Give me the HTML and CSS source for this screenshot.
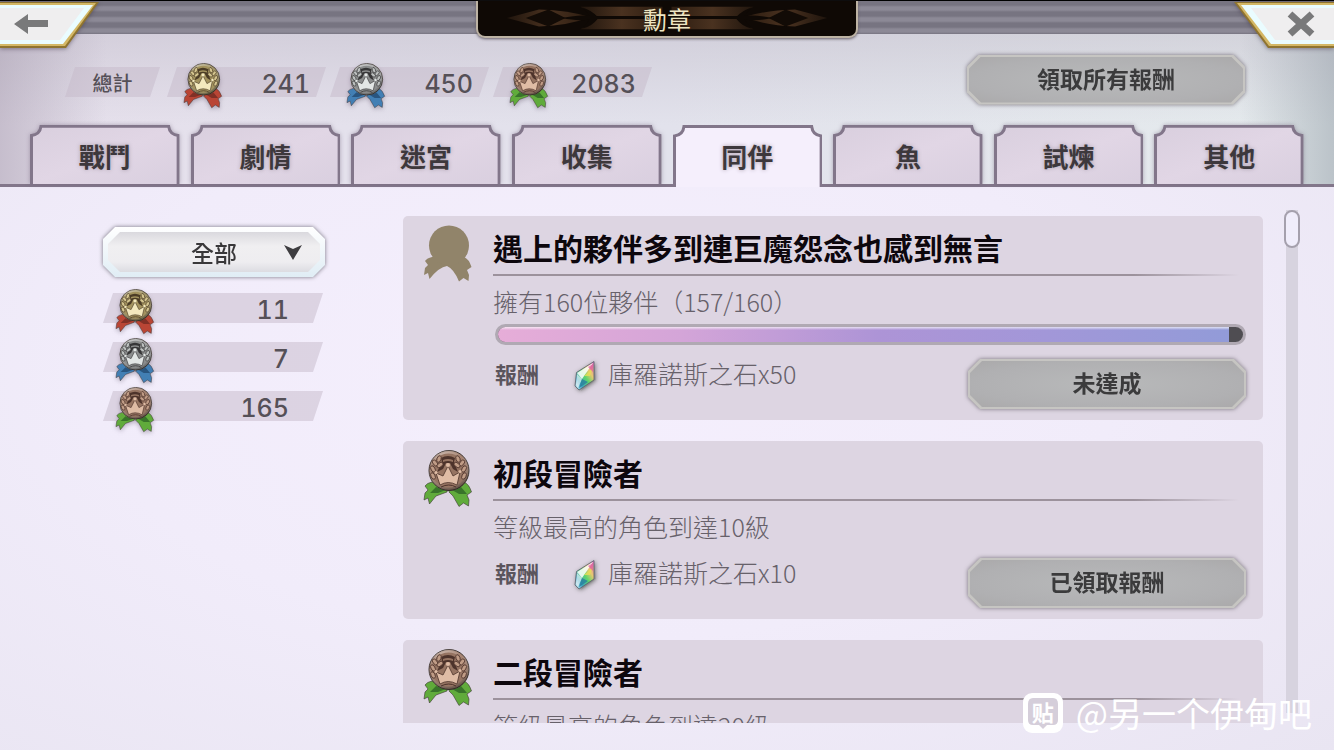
FILE: index.html
```html
<!DOCTYPE html>
<html lang="zh-Hant">
<head>
    <meta charset="UTF-8">
    <meta name="viewport" content="width=device-width, initial-scale=1.0">
    <title>勳章</title>
    <link rel="stylesheet" href="styles.css">
</head>
<body>

    <!-- Shared shapes -->
    <svg class="defs" aria-hidden="true">
        <defs>
            <radialGradient id="shine" cx="40%" cy="25%" r="75%">
                <stop offset="0" stop-color="#fff" stop-opacity=".6"/>
                <stop offset=".55" stop-color="#fff" stop-opacity="0"/>
                <stop offset="1" stop-color="#000" stop-opacity=".4"/>
            </radialGradient>
            <linearGradient id="tabFill" x1="0" y1="0" x2="1" y2="1">
                <stop offset="0" stop-color="#d9cfde"/>
                <stop offset=".5" stop-color="#e1d6e5"/>
                <stop offset="1" stop-color="#d9cfdf"/>
            </linearGradient>
            <linearGradient id="gem" x1="1" y1="0" x2="0" y2="1">
                <stop offset="0" stop-color="#d866c8"/>
                <stop offset=".3" stop-color="#e8c870"/>
                <stop offset=".5" stop-color="#5fd66a"/>
                <stop offset=".75" stop-color="#3ba6c4"/>
                <stop offset="1" stop-color="#e4f4f8"/>
            </linearGradient>
            <linearGradient id="plaqueFill">
                <stop offset="0" stop-color="#20150d"/>
                <stop offset=".5" stop-color="#4a3220"/>
                <stop offset="1" stop-color="#2c1c10"/>
            </linearGradient>
        </defs>
        <symbol id="medal" viewBox="0 0 50 58">
            <g stroke="#3c3434" stroke-width=".6" stroke-linejoin="round">
                <path class="ribbon" d="M9 32Q4 33 2 36L5 40 2 43 1 50 5 48 6.500 54 13 46 24 42 25 37Z"/>
                <path class="ribbon" d="M41 32Q46 34 48.500 42L44 45 46 50 45.500 56 40.500 53 36 56.500 30 46 26 42 27 37Z"/>
            </g>
            <path class="ribbon-dark" d="M13 37 7 43 15 43 23 40ZM38 37 44 44 36 44 29 40Z"/>
            <circle class="rim" cx="26" cy="20.500" r="20" stroke="#3f3733" stroke-width="1"/>
            <circle cx="26" cy="20.500" r="20" fill="url(#shine)"/>
            <circle class="disc" cx="25.500" cy="20.500" r="17"/>
            <path class="dark" d="M18 8Q25 4 32 8L31 12 35 22 30 19 27 13H23L20 19 14 22 19 12Z"/>
            <path class="shade" d="M20 10q5-2 10 0v2q-5-2-10 0Z"/>
            <g class="leaf">
                <ellipse cx="16" cy="9" rx="2" ry="3.500" transform="rotate(20 16 9)"/>
                <ellipse cx="12" cy="13" rx="2" ry="3.500" transform="rotate(-40 12 13)"/>
                <ellipse cx="17" cy="15" rx="2" ry="3.500" transform="rotate(50 17 15)"/>
                <ellipse cx="10" cy="19" rx="2" ry="3.500" transform="rotate(-30 10 19)"/>
                <ellipse cx="10" cy="26" rx="2" ry="3.500" transform="rotate(-25 10 26)"/>
                <ellipse cx="35" cy="9" rx="2" ry="3.500" transform="rotate(-20 35 9)"/>
                <ellipse cx="39" cy="13" rx="2" ry="3.500" transform="rotate(40 39 13)"/>
                <ellipse cx="34" cy="15" rx="2" ry="3.500" transform="rotate(-50 34 15)"/>
                <ellipse cx="41" cy="19" rx="2" ry="3.500" transform="rotate(30 41 19)"/>
                <ellipse cx="41" cy="26" rx="2" ry="3.500" transform="rotate(25 41 26)"/>
            </g>
            <path class="crown" d="M13 23 20 26 25 16 30 26 37 22 34 35Q25 30 17 35Z"/>
            <g class="crown-ball">
                <circle cx="13" cy="22.500" r="1.500"/>
                <circle cx="25" cy="15" r="2"/>
                <circle cx="37" cy="21.500" r="1.500"/>
            </g>
            <path class="crown-line" d="M18 37q8-4 15 0"/>
        </symbol>
        <symbol id="medal-blank" viewBox="0 0 50 58">
            <path fill="#91846a" d="M9 32Q4 33 2 36L5 40 2 43 1 50 5 48 6.500 54Q16 42 24 41Q31 44 36 56.500L40.500 53 45.500 56 46 50 44 45 48.500 42Q46 34 41 32Z"/>
            <circle fill="#91846a" cx="26" cy="20.500" r="20"/>
        </symbol>
        <symbol id="tab" viewBox="0 0 150 62" preserveAspectRatio="none">
            <path d="M1.500 62V11Q10 10 11 1.500H139Q140 10 148.500 11V62" stroke="#82768a" stroke-width="3"/>
        </symbol>
        <symbol id="stone" viewBox="0 0 28 34">
            <path d="M23 3 25 21 10 32Z" fill="#777" opacity=".3"/>
            <path d="M23 2.500V21L8 31 4 27 5.500 13.500Z" fill="url(#gem)" stroke="#59606c" stroke-width=".8"/>
            <path d="M22 4 6 14 11 20Z" fill="#fff" opacity=".85"/>
            <path d="M6 15 11 20 7 29 5 26Z" fill="#fff" opacity=".6"/>
            <path d="M13 17 22 9 19 17Z" fill="#e9dc55" opacity=".8"/>
            <path d="M17 8 22 5V13Z" fill="#e05aa0" opacity=".7"/>
            <path d="M11 20 17 23 8 29Z" fill="#287e9e" opacity=".8"/>
        </symbol>
        <symbol id="plaque-leaf" viewBox="0 0 191 36">
            <path fill="url(#plaqueFill)" d="M26 18 60 9Q92 10 114 17Q92 26 60 27Z"/>
            <path fill="#120b06" d="M46 18 70 9 88 18 70 27Z"/>
            <path fill="url(#plaqueFill)" d="M104 6H191V16H121ZM104 30H191V19H121Z"/>
            <path fill="#0f0905" d="M84 18Q104 14 114 16L106 7Q116 10 122 17H191V19H122Q116 27 106 29L114 19Q104 22 84 18Z"/>
        </symbol>
    </svg>

    <header class="top-bar">
        <button class="corner-button" type="button" aria-label="返回">
            <svg viewBox="0 0 100 48">
                <path d="M0 2H99L66 48H0Z" fill="#8f7430"/>
                <path d="M0 3H96L65 46H0Z" fill="#d4b765"/>
                <path d="M0 5H93L63 44H0Z" fill="#eafcff"/>
                <path d="M0 8H84L60 40H0Z" fill="#efeeef"/>
                <path d="M14 24 28 14V20H48V27H28V34Z" fill="#79797a"/>
            </svg>
        </button>
        <h1 class="page-title">
            <svg class="plaque-left" viewBox="0 0 191 36"><use href="#plaque-leaf"/></svg>
            <svg class="plaque-right" viewBox="0 0 191 36"><use href="#plaque-leaf"/></svg>
            <span>勳章</span>
        </h1>
        <button class="corner-button" type="button" aria-label="關閉">
            <svg viewBox="0 0 100 48">
                <path d="M0 2H100V48H34Z" fill="#8f7430"/>
                <path d="M3 3H100V46H35Z" fill="#d4b765"/>
                <path d="M7 5H100V44H37Z" fill="#eafcff"/>
                <path d="M17 8H100V40H41Z" fill="#efeeef"/>
                <path d="M56 14 78 34M78 14 56 34" stroke="#79797a" stroke-width="7"/>
            </svg>
        </button>
    </header>

    <section class="totals">
        <h2 class="plate total-label">總計</h2>
        <div class="plate total gold"><svg class="medal-small"><use href="#medal"/></svg><span>241</span></div>
        <div class="plate total silver"><svg class="medal-small"><use href="#medal"/></svg><span>450</span></div>
        <div class="plate total bronze"><svg class="medal-small"><use href="#medal"/></svg><span>2083</span></div>
        <button class="action-button" type="button">領取所有報酬</button>
    </section>

    <nav class="tabs">
        <button class="tab" type="button"><svg><use href="#tab"/></svg><span>戰鬥</span></button>
        <button class="tab" type="button"><svg><use href="#tab"/></svg><span>劇情</span></button>
        <button class="tab" type="button"><svg><use href="#tab"/></svg><span>迷宮</span></button>
        <button class="tab" type="button"><svg><use href="#tab"/></svg><span>收集</span></button>
        <button class="tab active" type="button"><svg><use href="#tab"/></svg><span>同伴</span></button>
        <button class="tab" type="button"><svg><use href="#tab"/></svg><span>魚</span></button>
        <button class="tab" type="button"><svg><use href="#tab"/></svg><span>試煉</span></button>
        <button class="tab" type="button"><svg><use href="#tab"/></svg><span>其他</span></button>
    </nav>

    <main class="content">
        <aside class="sidebar">
            <div class="filter">
                <select aria-label="篩選">
                    <option>全部</option>
                </select>
                <svg class="filter-arrow" viewBox="0 0 18 15"><path d="M0 0 9 4 18 0 9 15Z"/></svg>
            </div>
            <div class="plate count gold"><svg class="medal-small"><use href="#medal"/></svg><span>11</span></div>
            <div class="plate count silver"><svg class="medal-small"><use href="#medal"/></svg><span>7</span></div>
            <div class="plate count bronze"><svg class="medal-small"><use href="#medal"/></svg><span>165</span></div>
        </aside>

        <div class="list">
            <article class="card">
                <svg class="medal-large"><use href="#medal-blank"/></svg>
                <div class="card-body">
                    <h3>遇上的夥伴多到連巨魔怨念也感到無言</h3>
                    <p class="description">擁有160位夥伴（157/160）</p>
                    <div class="progress" role="progressbar" aria-label="進度" aria-valuenow="157" aria-valuemax="160">
                        <div class="progress-fill" style="width: 98.125%"></div>
                    </div>
                    <div class="reward">
                        <span class="reward-label">報酬</span>
                        <svg class="stone"><use href="#stone"/></svg>
                        <span class="reward-name">庫羅諾斯之石x50</span>
                        <button class="action-button" type="button">未達成</button>
                    </div>
                </div>
            </article>

            <article class="card bronze">
                <svg class="medal-large"><use href="#medal"/></svg>
                <div class="card-body">
                    <h3>初段冒險者</h3>
                    <p class="description">等級最高的角色到達10級</p>
                    <div class="reward">
                        <span class="reward-label">報酬</span>
                        <svg class="stone"><use href="#stone"/></svg>
                        <span class="reward-name">庫羅諾斯之石x10</span>
                        <button class="action-button" type="button">已領取報酬</button>
                    </div>
                </div>
            </article>

            <article class="card bronze">
                <svg class="medal-large"><use href="#medal"/></svg>
                <div class="card-body">
                    <h3>二段冒險者</h3>
                    <p class="description">等級最高的角色到達20級</p>
                </div>
            </article>
        </div>

        <div class="scroll-track"><div class="scroll-thumb"></div></div>
    </main>

    <div class="watermark">
        <span class="watermark-logo">
            <svg viewBox="0 0 40 40">
                <rect width="40" height="40" rx="9" fill="#fff"/>
                <path d="M10 5H30Q35 5 35 11V27Q35 32 30 32H24L20 36 16 32H10Q5 32 5 27V11Q5 5 10 5Z" fill="#d5ceda"/>
            </svg>
            <b>贴</b>
        </span>
        <span>@另一个伊甸吧</span>
    </div>

</body>
</html>
```
FILE: styles.css
```css
* {
    box-sizing: border-box;
}
body {
    display: flex;
    flex-direction: column;
    height: 100vh;
    margin: 0;
    overflow: hidden;
    font-family: "Noto Sans CJK TC", sans-serif;
    color: #555057;
    background: radial-gradient(ellipse at 45% 50%, #f5effd 0%, #f1ecfa 50%, #e9e5f2 100%);
}
h1, h2, h3, p {
    margin: 0;
}
button, select {
    padding: 0;
    border: none;
    background: none;
    font-family: inherit;
    cursor: pointer;
}
svg {
    display: block;
}
.defs {
    position: absolute;
    width: 0;
    height: 0;
}

/* Medal colours */
.rim { fill: var(--rim); }
.disc { fill: var(--disc); }
.leaf { fill: var(--leaf); stroke: var(--dark); stroke-width: 0.8; }
.dark { fill: var(--dark); }
.shade { fill: var(--disc); }
.crown { fill: var(--light); stroke: var(--dark); stroke-width: 0.8; }
.crown-ball { fill: var(--light); }
.crown-line { fill: none; stroke: var(--dark); stroke-width: 1; }
.ribbon { fill: var(--ribbon); }
.ribbon-dark { fill: var(--ribbon-dark); }
.gold {
    --rim: #a39669;
    --disc: #a3935f;
    --leaf: #d3c48e;
    --light: #f3e9be;
    --dark: #4b3c26;
    --ribbon: #b94535;
    --ribbon-dark: #813026;
}
.silver {
    --rim: #a1a2a2;
    --disc: #8b8d8d;
    --leaf: #bcc0bf;
    --light: #e2e6e5;
    --dark: #363637;
    --ribbon: #427fb4;
    --ribbon-dark: #29557f;
}
.bronze {
    --rim: #a58371;
    --disc: #967462;
    --leaf: #c09c86;
    --light: #dfbca5;
    --dark: #4d332b;
    --ribbon: #60ab3b;
    --ribbon-dark: #39742a;
}

/* Top bar */
.top-bar {
    display: flex;
    justify-content: space-between;
    align-items: flex-start;
    height: 34px;
    flex-shrink: 0;
    border-top: 1px solid #000;
    background: repeating-linear-gradient(#777481 0, #777481 4px, #8c8996 6px, #8c8996 9px, #777481 11px);
    position: relative;
    z-index: 1;
}
.corner-button svg {
    width: 100px;
    height: 48px;
    margin-top: -1px;
    filter: drop-shadow(0 1px 2px rgba(60, 50, 70, 0.5));
}
.page-title {
    position: relative;
    width: 382px;
    height: 37px;
    border: 2px solid #bdb3a4;
    border-top: none;
    border-radius: 0 0 9px 9px;
    background: #0f0905;
    box-shadow: 0 1px 3px #665e68;
    color: #eee6c3;
    font-size: 24px;
    font-weight: 400;
    line-height: 36px;
    text-align: center;
}
.page-title span {
    position: relative;
}
.plaque-left, .plaque-right {
    position: absolute;
    top: 0;
    left: 0;
    width: 50%;
    height: 34px;
}
.plaque-right {
    left: 50%;
    transform: scaleX(-1);
}

/* Totals */
.totals {
    display: flex;
    align-items: center;
    gap: 4px;
    flex-shrink: 0;
    height: 91px;
    padding: 0 89px 0 65px;
    background: linear-gradient(90deg, rgba(150, 138, 158, 0.4), transparent 8%, transparent 93%, rgba(145, 155, 165, 0.5)),
        linear-gradient(rgba(195, 190, 203, 0.5), rgba(195, 190, 203, 0)),
        linear-gradient(90deg, #e6e0ec, #e2e2ec 50%, #e5ebed);
}
.plate {
    display: flex;
    align-items: center;
    position: relative;
    height: 30px;
    isolation: isolate;
    font-family: Inter, "Noto Sans CJK TC", sans-serif;
    font-size: 25px;
    font-weight: 500;
    font-variant-numeric: tabular-nums;
}
.plate::before {
    content: "";
    position: absolute;
    inset: 0;
    z-index: -1;
    background: rgba(198, 185, 202, 0.5);
    clip-path: polygon(10px 0, 100% 0, calc(100% - 10px) 100%, 0 100%);
}
.totals .plate {
    margin-top: 5px;
}
.total-label {
    justify-content: center;
    width: 95px;
    margin-right: 3px;
    font-size: 20px;
}
.total {
    justify-content: space-between;
    width: 159px;
    padding: 3px 16px 0 16px;
}
.medal-small {
    width: 40px;
    height: 46px;
    margin-top: 4px;
    filter: drop-shadow(0 2px 2px rgba(80, 65, 90, 0.35));
}
.totals .action-button {
    margin-left: auto;
}
.action-button {
    position: relative;
    isolation: isolate;
    width: 278px;
    height: 50px;
    color: #3b3b3c;
    font-size: 23px;
    font-weight: 700;
    line-height: 46px;
    filter: drop-shadow(0 0 2px #77717a);
}
.action-button::before, .action-button::after {
    content: "";
    position: absolute;
    z-index: -1;
    inset: 0;
    clip-path: polygon(12px 0, calc(100% - 12px) 0, 100% 12px, 100% calc(100% - 12px), calc(100% - 12px) 100%, 12px 100%, 0 calc(100% - 12px), 0 12px);
}
.action-button::before {
    background: #c6c5c2;
}
.action-button::after {
    inset: 2px;
    background: radial-gradient(ellipse, #b8b9ba, #b0b0b2 70%, #aaa9aa);
}
.action-button {
    padding-bottom: 4px;
}

/* Tabs */
.tabs {
    display: grid;
    grid-template-columns: repeat(8, 1fr);
    gap: 11px;
    flex-shrink: 0;
    height: 62px;
    padding: 0 30px;
    border-bottom: 3px solid #82768a;
    background: linear-gradient(90deg, rgba(150, 138, 158, 0.4), transparent 8%, transparent 93%, rgba(145, 155, 165, 0.5)),
        linear-gradient(90deg, #e6e0ec, #e2e2ec 50%, #e5ebed);
}
.tab {
    position: relative;
    height: 62px;
    color: #3d383c;
    font-size: 26px;
    font-weight: 700;
    line-height: 62px;
}
.tab svg {
    position: absolute;
    inset: 0;
    width: 100%;
    height: 59px;
    fill: url(#tabFill);
    filter: drop-shadow(0 0 2px rgba(110, 95, 120, 0.5));
}
.tab span {
    position: relative;
    text-shadow: 0 0 4px #a89dab;
}
.tab.active svg {
    height: 62px;
    fill: #f5effc;
    filter: none;
}

/* Content */
.content {
    display: grid;
    grid-template-columns: 222px 1fr 16px;
    flex: 1;
    min-height: 0;
    padding: 23px 34px 27px 103px;
}
.sidebar {
    display: flex;
    flex-direction: column;
    gap: 19px;
    padding-top: 17px;
}
.filter {
    position: relative;
    isolation: isolate;
    height: 50px;
    margin-bottom: -3px;
    filter: drop-shadow(0 0 2px #75717e);
}
.filter::before, .filter::after {
    content: "";
    position: absolute;
    z-index: -1;
    inset: 0;
    background: linear-gradient(#fff, #e0edf5);
    clip-path: polygon(12px 0, calc(100% - 12px) 0, 100% 12px, 100% calc(100% - 12px), calc(100% - 12px) 100%, 12px 100%, 0 calc(100% - 12px), 0 12px);
}
.filter::after {
    inset: 5px;
    background: linear-gradient(#dad9de, #f0eff1 35%, #eeedf0 75%, #dcdce1);
}
.filter select {
    appearance: none;
    width: 100%;
    height: 50px;
    color: #39383a;
    font-size: 23px;
    font-weight: 500;
    text-align-last: center;
}
.filter-arrow {
    position: absolute;
    top: 18px;
    right: 23px;
    width: 18px;
    height: 15px;
    fill: #3e3d40;
    pointer-events: none;
}
.count {
    justify-content: space-between;
    width: 220px;
    padding: 4px 34px 0 12px;
}

/* Medal list */
.list {
    display: flex;
    flex-direction: column;
    gap: 21px;
    margin: 6px 21px 0 78px;
    overflow: hidden;
}
.card {
    display: flex;
    flex-shrink: 0;
    gap: 20px;
    padding: 0 17px 11px 20px;
    border-radius: 5px;
    background: #ddd5e2;
}
.medal-large {
    flex-shrink: 0;
    width: 50px;
    height: 58px;
    margin-top: 9px;
}
.card-body {
    flex: 1;
    min-width: 0;
}
.card h3 {
    height: 60px;
    border-bottom: 2px solid;
    border-image: linear-gradient(90deg, #9c929c 85%, transparent 99%) 1;
    color: #0d070d;
    font-size: 30px;
    font-weight: 700;
    line-height: 62px;
    white-space: nowrap;
}
.description {
    padding-top: 7px;
    color: #67616a;
    font-size: 25px;
    font-weight: 300;
    line-height: 36px;
    white-space: nowrap;
}
.progress {
    height: 21px;
    margin: 5px 0 0 2px;
    padding: 3px;
    border-radius: 11px;
    overflow: hidden;
    background: linear-gradient(#4f4d52, #4f4d52) content-box, #b0a9b3;
}
.progress-fill {
    height: 15px;
    border-radius: 8px 0 0 8px;
    background: linear-gradient(rgba(255, 255, 255, 0.7), transparent 20%),
        linear-gradient(90deg, #e6add8, #d4a5d8 25%, #ad94d6 52%, #a297d8 75%, #929bd8);
}
.reward {
    display: flex;
    align-items: flex-start;
    margin-top: 14px;
    color: #67616a;
    line-height: 28px;
    white-space: nowrap;
}
.reward-label {
    width: 78px;
    padding-left: 2px;
    color: #5b555d;
    font-size: 22px;
    font-weight: 700;
}
.stone {
    width: 28px;
    height: 34px;
    filter: drop-shadow(1px 1px 2px #777);
}
.reward-name {
    margin-left: 9px;
    font-size: 25px;
    font-weight: 300;
}
.reward .action-button {
    margin-left: auto;
}
.scroll-track {
    margin-bottom: 10px;
    background: linear-gradient(90deg, transparent 2px, #d7d3df 2px, #d7d3df 14px, transparent 14px);
}
.scroll-thumb {
    height: 38px;
    border: 2px solid #a5a0ad;
    border-radius: 8px;
    background: #f0edfb;
}

.watermark {
    display: flex;
    align-items: center;
    gap: 13px;
    position: absolute;
    z-index: 2;
    right: 22px;
    bottom: 12px;
    color: #fff;
    font-family: "Noto Sans CJK SC", sans-serif;
    font-size: 34px;
    line-height: 50px;
}
.watermark-logo {
    position: relative;
    width: 40px;
    height: 40px;
}
.watermark-logo b {
    position: absolute;
    inset: 0;
    font-size: 22px;
    line-height: 36px;
    text-align: center;
}
```
